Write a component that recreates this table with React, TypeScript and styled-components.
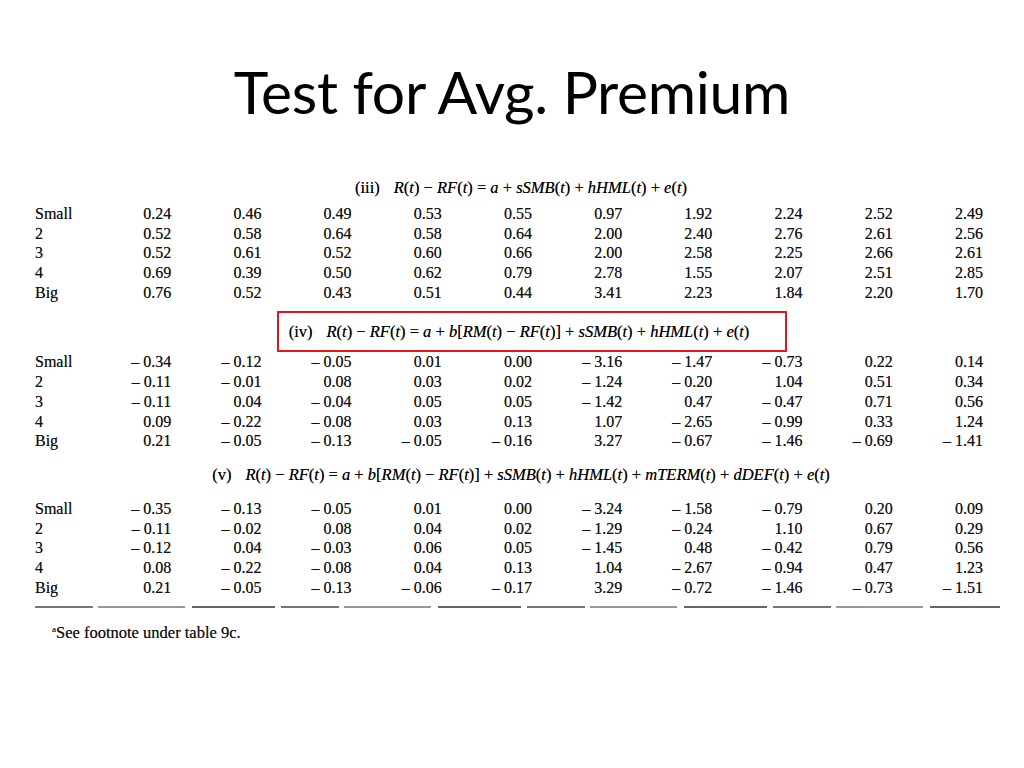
import React from "react";
import styled, { createGlobalStyle } from "styled-components";

const Global = createGlobalStyle`
  html, body { margin: 0; padding: 0; background: #fff; }
  body { font-family: "Liberation Serif", "Times New Roman", serif; }
`;

const Slide = styled.div`
  width: 1024px;
  height: 768px;
  background: #fff;
  overflow: hidden;
  display: flex;
  flex-direction: column;
`;

const TitleBar = styled.div`
  height: 171px;
  display: flex;
  justify-content: center;
  box-sizing: border-box;
  padding-top: 58px;
`;

const Title = styled.h1`
  margin: 0;
  font-family: Lato, "Open Sans", sans-serif;
  font-weight: 400;
  font-size: 58.8px;
  line-height: 68px;
  color: #000;
  letter-spacing: -0.3px;
`;

const Table = styled.div`
  margin-left: 35px;
  width: 948px;
  color: #111;
  font-family: "Liberation Serif", "Times New Roman", serif;
  text-shadow: 0 0 0.6px rgba(0, 0, 0, 0.6);
`;

const Heading = styled.div<{ $shift: number; $top: number; $height: number }>`
  display: flex;
  justify-content: center;
  align-items: center;
  box-sizing: border-box;
  padding-left: ${(p) => p.$shift}px;
  margin-top: ${(p) => p.$top}px;
  height: ${(p) => p.$height}px;
`;

const Formula = styled.span`
  font-size: 16.5px;
  line-height: 24px;
  color: #000;
  white-space: nowrap;
`;

const Highlight = styled.div`
  box-sizing: border-box;
  height: 41px;
  border: 2.5px solid #e3161b;
  padding: 0 36px 0 10px;
  display: flex;
  align-items: center;
`;

const Tag = styled.span`
  margin-right: 14px;
`;

const V = styled.i`
  font-style: italic;
`;

const Row = styled.div`
  display: grid;
  grid-template-columns: 46px repeat(10, 90.2px);
  height: 19.7px;
  line-height: 19.7px;
  font-size: 16px;
`;

const Label = styled.span`
  text-align: left;
`;

const Num = styled.span`
  text-align: right;
  white-space: pre;
`;

const Rule = styled.div`
  margin-top: 9px;
  width: 965px;
  height: 1.5px;
  background: repeating-linear-gradient(
    90deg,
    #777 0 58px,
    transparent 58px 63px,
    #999 63px 150px,
    transparent 150px 157px,
    #666 157px 240px,
    transparent 240px 246px
  );
`;

const Footnote = styled.div`
  margin-top: 11px;
  padding-left: 17px;
  font-size: 16.5px;
  line-height: 20px;
  color: #111;
`;

const Sup = styled.span`
  font-size: 9px;
  vertical-align: 6px;
`;

type Block = { label: string; vals: string[] }[];

const labels = ["Small", "2", "3", "4", "Big"];

const parse = (rows: string[]): Block =>
  rows.map((r, i) => ({ label: labels[i], vals: r.trim().split(/\s+/) }));

const fmt = (v: string) => (v.startsWith("-") ? "\u2013 " + v.slice(1) : v);

const blockIII = parse([
  "0.24 0.46 0.49 0.53 0.55 0.97 1.92 2.24 2.52 2.49",
  "0.52 0.58 0.64 0.58 0.64 2.00 2.40 2.76 2.61 2.56",
  "0.52 0.61 0.52 0.60 0.66 2.00 2.58 2.25 2.66 2.61",
  "0.69 0.39 0.50 0.62 0.79 2.78 1.55 2.07 2.51 2.85",
  "0.76 0.52 0.43 0.51 0.44 3.41 2.23 1.84 2.20 1.70",
]);

const blockIV = parse([
  "-0.34 -0.12 -0.05 0.01 0.00 -3.16 -1.47 -0.73 0.22 0.14",
  "-0.11 -0.01 0.08 0.03 0.02 -1.24 -0.20 1.04 0.51 0.34",
  "-0.11 0.04 -0.04 0.05 0.05 -1.42 0.47 -0.47 0.71 0.56",
  "0.09 -0.22 -0.08 0.03 0.13 1.07 -2.65 -0.99 0.33 1.24",
  "0.21 -0.05 -0.13 -0.05 -0.16 3.27 -0.67 -1.46 -0.69 -1.41",
]);

const blockV = parse([
  "-0.35 -0.13 -0.05 0.01 0.00 -3.24 -1.58 -0.79 0.20 0.09",
  "-0.11 -0.02 0.08 0.04 0.02 -1.29 -0.24 1.10 0.67 0.29",
  "-0.12 0.04 -0.03 0.06 0.05 -1.45 0.48 -0.42 0.79 0.56",
  "0.08 -0.22 -0.08 0.04 0.13 1.04 -2.67 -0.94 0.47 1.23",
  "0.21 -0.05 -0.13 -0.06 -0.17 3.29 -0.72 -1.46 -0.73 -1.51",
]);

const Rows: React.FC<{ data: Block }> = ({ data }) => (
  <>
    {data.map((r) => (
      <Row key={r.label}>
        <Label>{r.label}</Label>
        {r.vals.map((v, i) => (
          <Num key={i}>{fmt(v)}</Num>
        ))}
      </Row>
    ))}
  </>
);

const T = () => (
  <>
    (<V>t</V>)
  </>
);

const Lhs = () => (
  <>
    <V>R</V>
    <T /> &minus; <V>RF</V>
    <T /> = <V>a</V> +{" "}
  </>
);

const Market = () => (
  <>
    <V>b</V>[<V>RM</V>
    <T /> &minus; <V>RF</V>
    <T />] +{" "}
  </>
);

const Factors = () => (
  <>
    <V>sSMB</V>
    <T /> + <V>hHML</V>
    <T /> +{" "}
  </>
);

export default function App() {
  return (
    <>
      <Global />
      <Slide>
        <TitleBar>
          <Title>Test for Avg. Premium</Title>
        </TitleBar>
        <Table>
          <Heading $shift={24} $top={0} $height={33}>
            <Formula>
              <Tag>(iii)</Tag>
              <Lhs />
              <Factors />
              <V>e</V>
              <T />
            </Formula>
          </Heading>
          <Rows data={blockIII} />
          <Heading $shift={46} $top={9} $height={41}>
            <Highlight>
              <Formula>
                <Tag>(iv)</Tag>
                <Lhs />
                <Market />
                <Factors />
                <V>e</V>
                <T />
              </Formula>
            </Highlight>
          </Heading>
          <Rows data={blockIV} />
          <Heading $shift={24} $top={0} $height={48}>
            <Formula>
              <Tag>(v)</Tag>
              <Lhs />
              <Market />
              <Factors />
              <V>mTERM</V>
              <T /> + <V>dDEF</V>
              <T /> + <V>e</V>
              <T />
            </Formula>
          </Heading>
          <Rows data={blockV} />
          <Rule />
          <Footnote>
            <Sup>a</Sup>See footnote under table 9c.
          </Footnote>
        </Table>
      </Slide>
    </>
  );
}
